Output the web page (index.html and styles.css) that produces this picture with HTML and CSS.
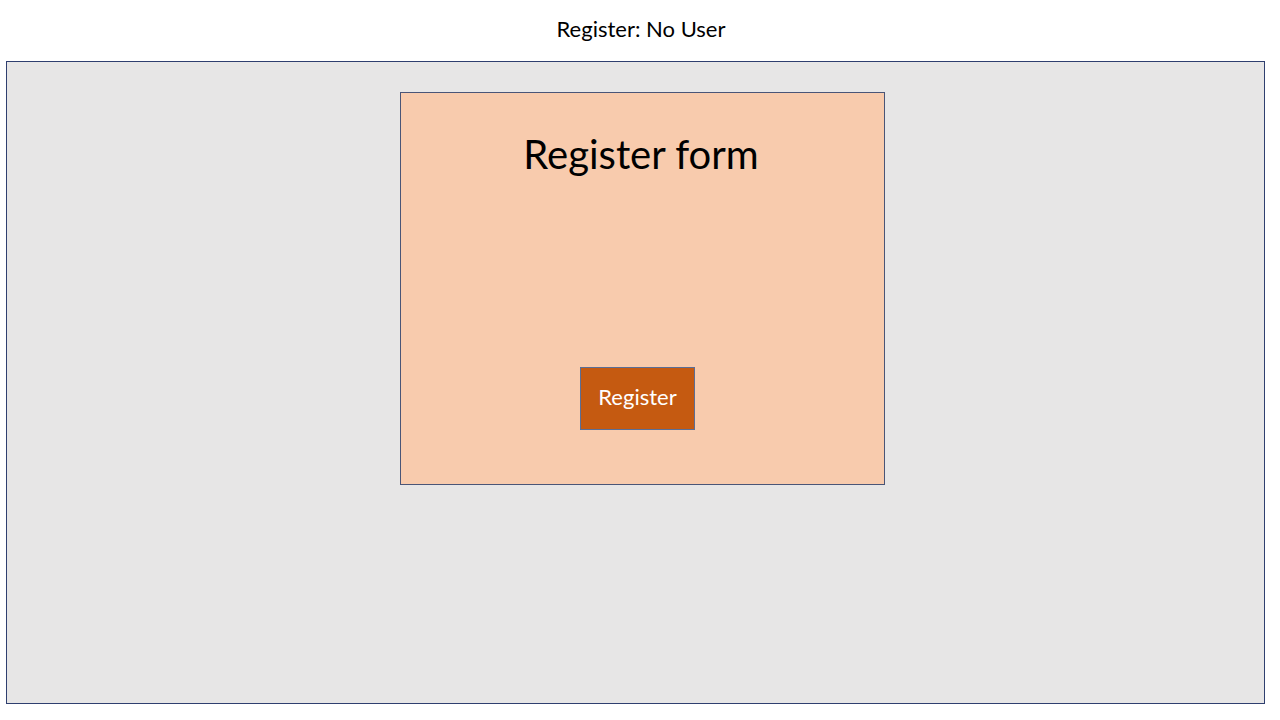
FILE: index.html
```html
<!DOCTYPE html>
<html lang="en">
<head>
<meta charset="utf-8">
<title>Register: No User</title>
<link rel="stylesheet" href="styles.css">
</head>
<body>
<header class="top-bar">
  <h1 class="status">Register: No User</h1>
</header>
<main class="canvas">
  <section class="form-card">
    <h2 class="form-title">Register form</h2>
    <button class="register-btn" type="button">Register</button>
  </section>
</main>
</body>
</html>
```

FILE: styles.css
```css
* { box-sizing: border-box; }

html, body {
  margin: 0;
  padding: 0;
  background: #ffffff;
  width: 1280px;
  height: 720px;
  overflow: hidden;
  font-family: "Lato", "Open Sans", "Liberation Sans", sans-serif;
  color: #000000;
}

.top-bar {
  height: 61px;
  display: flex;
  justify-content: center;
  align-items: flex-start;
  padding-top: 15px;
}

.status {
  margin: 0;
  font-size: 22px;
  font-weight: 400;
  line-height: 28px;
  padding-left: 2px;
}

.canvas {
  margin-left: 6px;
  width: 1259px;
  height: 643px;
  background: #e7e6e6;
  border: 1px solid #2f3f6f;
  padding-top: 30px;
  padding-left: 393px;
}

.form-card {
  width: 485px;
  height: 393px;
  background: #f8cbad;
  border: 1px solid #4a5577;
  display: flex;
  flex-direction: column;
  align-items: flex-start;
}

.form-title {
  margin: 0;
  width: 100%;
  text-align: center;
  font-size: 40px;
  font-weight: 400;
  line-height: 50px;
  margin-top: 36px;
  padding-right: 3px;
}

.register-btn {
  margin-top: 188px;
  margin-left: 179px;
  width: 115px;
  height: 63px;
  background: #c55a11;
  border: 1px solid #5b6e95;
  color: #ffffff;
  font-family: inherit;
  font-size: 22px;
  line-height: 1;
  padding: 0 0 4px 0;
  cursor: pointer;
}
```
